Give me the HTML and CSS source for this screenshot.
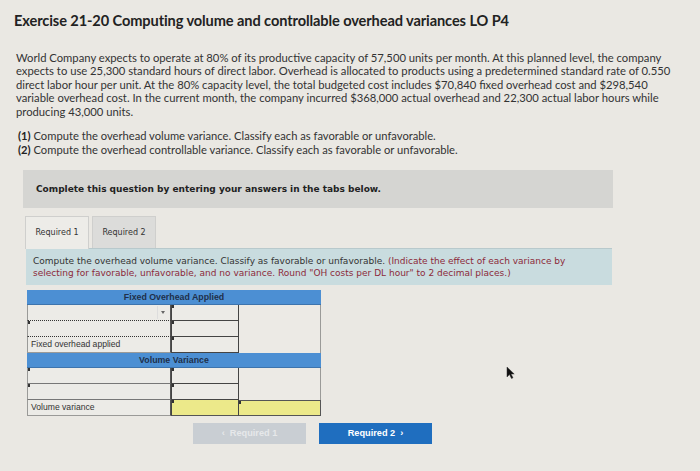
FILE: index.html
```html
<!DOCTYPE html>
<html>
<head>
<meta charset="utf-8">
<link rel="stylesheet" href="styles.css">
</head>
<body>
<div class="page">
  <h1 class="title">Exercise 21-20 Computing volume and controllable overhead variances LO P4</h1>
  <p class="intro">World Company expects to operate at 80% of its productive capacity of 57,500 units per month. At this planned level, the company expects to use 25,300 standard hours of direct labor. Overhead is allocated to products using a predetermined standard rate of 0.550 direct labor hour per unit. At the 80% capacity level, the total budgeted cost includes $70,840 fixed overhead cost and $298,540 variable overhead cost. In the current month, the company incurred $368,000 actual overhead and 22,300 actual labor hours while producing 43,000 units.</p>
  <div class="reqs">
    <div><b>(1)</b> Compute the overhead volume variance. Classify each as favorable or unfavorable.</div>
    <div><b>(2)</b> Compute the overhead controllable variance. Classify each as favorable or unfavorable.</div>
  </div>
  <div class="notice">Complete this question by entering your answers in the tabs below.</div>
  <div class="tabs">
    <div class="tab active">Required 1</div>
    <div class="tab">Required 2</div>
  </div>
  <div class="info">Compute the overhead volume variance. Classify as favorable or unfavorable. <span class="hint">(Indicate the effect of each variance by selecting for favorable, unfavorable, and no variance. Round "OH costs per DL hour" to 2 decimal places.)</span></div>
  <div class="grid">
    <div class="hdr">Fixed Overhead Applied</div>
    <div class="c1 sel dotted"><span class="arrow"></span></div>
    <div class="c2 inp"></div>
    <div class="c3"></div>
    <div class="c1 inp dotted"></div>
    <div class="c2 inp"></div>
    <div class="c3"></div>
    <div class="c1 lbl">Fixed overhead applied</div>
    <div class="c2 inp"></div>
    <div class="c3"></div>
    <div class="hdr">Volume Variance</div>
    <div class="c1 inp"></div>
    <div class="c2 inp"></div>
    <div class="c3"></div>
    <div class="c1 inp"></div>
    <div class="c2 inp"></div>
    <div class="c3"></div>
    <div class="c1 lbl">Volume variance</div>
    <div class="c2 inp yellow"></div>
    <div class="c3 inp yellow"></div>
  </div>
  <div class="nav">
    <div class="btn disabled">&lsaquo;&nbsp;&nbsp;Required 1</div>
    <div class="btn primary">Required 2&nbsp;&nbsp;&rsaquo;</div>
  </div>
</div>
<svg class="cursor" width="9" height="13" viewBox="0 0 9 13"><path d="M1 1 L1 11 L3.5 8.5 L5.5 12.5 L7 11.8 L5 8 L8.2 8 Z" fill="#111" stroke="#333" stroke-width="0.5"/></svg>
</body>
</html>
```
FILE: styles.css
```css
html, body {
  margin: 0;
  padding: 0;
}
body {
  background: #eae8e3;
  width: 700px;
  height: 471px;
  overflow: hidden;
  position: relative;
  font-family: Lato, "Open Sans", sans-serif;
  color: #2a2a2a;
}
.page {
  padding: 12px 0 0 14px;
}
.title {
  margin: 0;
  font-size: 14.6px;
  line-height: 18px;
  font-weight: 700;
  color: #222;
  letter-spacing: -0.1px;
}
.intro {
  margin: 21px 0 0 2px;
  width: 665px;
  font-size: 11.25px;
  line-height: 13.4px;
  color: #333;
}
.reqs {
  margin: 11px 0 0 4px;
  font-size: 11.2px;
  line-height: 14px;
  color: #333;
}
.reqs b {
  font-weight: 700;
  color: #222;
}
.notice {
  margin: 13px 0 0 9px;
  width: 577px;
  height: 38px;
  padding-left: 13px;
  background: #d5d5d2;
  font-family: "DejaVu Sans", Verdana, sans-serif;
  font-weight: 700;
  font-size: 9px;
  line-height: 38px;
  color: #222;
}
.tabs {
  display: flex;
  gap: 3px;
  margin: 8px 0 0 11px;
}
.tab {
  height: 31px;
  width: 62px;
  border: 1px solid #cfcfcd;
  border-bottom: none;
  background: #dcdcda;
  font-family: "DejaVu Sans", Verdana, sans-serif;
  font-size: 8px;
  line-height: 31px;
  text-align: center;
  color: #333;
}
.tab.active {
  background: #edece8;
  height: 32px;
  margin-bottom: -1px;
}
.info {
  margin: 0 0 0 12px;
  width: 560px;
  padding: 7px 19px 0 7px;
  box-sizing: content-box;
  height: 29px;
  background: #c9dcdf;
  border-top: 1px solid #b8c9cc;
  font-family: "DejaVu Sans", Verdana, sans-serif;
  font-size: 9px;
  line-height: 11.5px;
  color: #333;
}
.hint {
  color: #8c2a3a;
}
.grid {
  margin: 5px 0 0 13px;
  display: grid;
  grid-template-columns: 144px 68px 82px;
  width: 294px;
  font-family: "Liberation Sans", Arial, sans-serif;
}
.hdr {
  grid-column: 1 / 4;
  background: #4c8fd3;
  color: #1f2f4a;
  font-weight: 700;
  font-size: 8.8px;
  height: 15px;
  box-sizing: border-box;
  line-height: 14px;
  text-align: center;
  border-bottom: 1px solid #3d74ad;
}
.c1, .c2, .c3 {
  height: 16px;
  box-sizing: border-box;
  background: #ecebe7;
  position: relative;
}
.c1 {
  border-left: 1px solid #9a9a98;
  border-right: 1px solid #555;
  border-bottom: 1px solid #777;
}
.c2.inp {
  border-right: 1px solid #444;
  border-bottom: 1px solid #444;
  border-left: 1px solid #444;
}
.c3 {
  border-right: 1px solid #9a9a98;
  background: #eceae5;
}
.c1.dotted {
  border-bottom: 1px dotted #333;
}
.inp::before {
  content: "";
  position: absolute;
  left: 0;
  top: 0;
  width: 2px;
  height: 3px;
  background: #333;
}
.sel .arrow {
  position: absolute;
  right: 2px;
  top: 1px;
  width: 10px;
  height: 13px;
  border-left: 1px solid #ddd;
}
.sel .arrow::after {
  content: "";
  position: absolute;
  left: 3px;
  top: 5px;
  border-left: 2.5px solid transparent;
  border-right: 2.5px solid transparent;
  border-top: 3px solid #666;
}
.lbl {
  font-size: 8.6px;
  line-height: 15px;
  padding-left: 3px;
  color: #333;
  border-bottom: 1px solid #9a9a98;
}
.yellow {
  background: #ece98a;
}
.c3.yellow {
  border: 1px solid #555;
  border-left: none;
}
.c2.yellow {
  border-bottom: 1px solid #555;
}
.grid > .c3:not(.yellow) {
  border-bottom: none;
}
.nav {
  display: flex;
  gap: 13px;
  margin: 7px 0 0 179px;
}
.btn {
  width: 113px;
  height: 21px;
  line-height: 21px;
  text-align: center;
  font-family: "Liberation Sans", Arial, sans-serif;
  font-weight: 700;
  font-size: 9.2px;
}
.btn.disabled {
  background: #c9ced3;
  color: #e6e8ea;
}
.btn.primary {
  background: #1f6ebf;
  color: #fff;
}
.cursor {
  position: absolute;
  left: 506px;
  top: 366px;
}
```
